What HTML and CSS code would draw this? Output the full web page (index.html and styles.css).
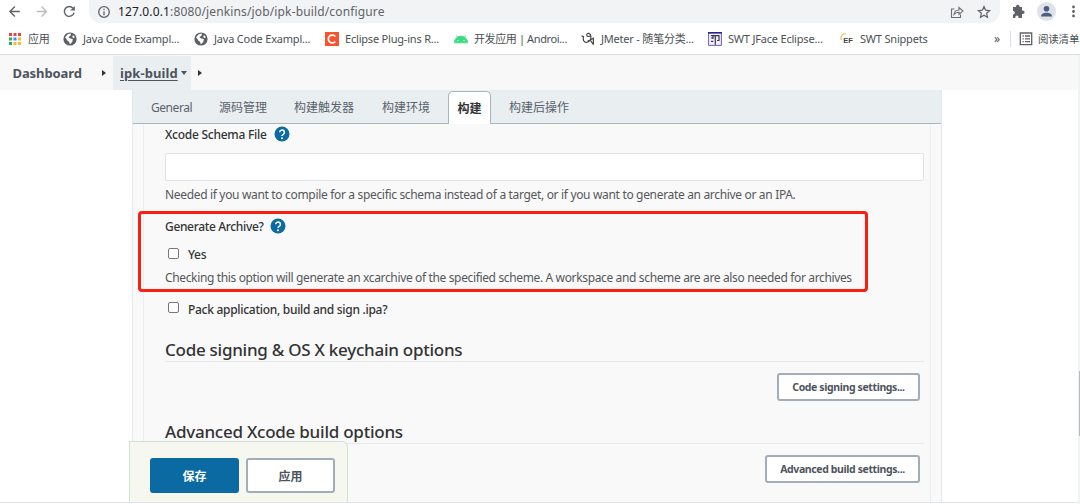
FILE: index.html
```
<!DOCTYPE html>
<html lang="zh-CN">
<head>
<meta charset="utf-8">
<title>ipk-build Config [Jenkins]</title>
<link rel="stylesheet" href="styles.css">
</head>
<body>
<svg class="defs" width="0" height="0">
  <symbol id="globe" viewBox="0 0 14 14"><circle cx="7" cy="7" r="6.6" fill="#5c6064"/><path d="M2 5.2 5 2l3-.4-.4 2L5.400 5.200l1.800 1.400 2.600.5-.5 2.800-2.500 2.400-.8-2.500-1.800-1.200-.7-1.700zM10 3l1.800 2-1 1.200-1.600-1.200z" fill="#fff"/></symbol>
  <symbol id="help" viewBox="0 0 16 16"><circle cx="8" cy="8" r="7.500" fill="#0b6aa2"/><path d="M5.700 6.300a2.350 2.350 0 1 1 3.600 2Q8 9 8 10" fill="none" stroke="#fff" stroke-width="1.500"/><circle cx="8" cy="12.200" r="1" fill="#fff"/></symbol>
</svg>

<header class="toolbar">
  <svg class="nav" viewBox="0 0 90 24" fill="none" stroke="#5f6368" stroke-width="1.400">
    <path d="M20 11.500H10M15 6.500l-5 5 5 5"/>
    <path d="M37 11.500h10M42 6.500l5 5-5 5" stroke="#b9bcc0"/>
    <path d="M74 8.300a5 5 0 1 0 .9 4.500"/><path d="M75.700 6v4.600H71z" fill="#5f6368" stroke="none"/>
  </svg>
  <div class="omnibox">
    <svg class="info" viewBox="0 0 14 14" fill="none" stroke="#5f6368" stroke-width="1.300"><circle cx="7" cy="7" r="5.300"/><path d="M7 6.300v4M7 3.800v1.300"/></svg>
    <span class="url"><b>127.0.0.1</b>:8080/jenkins/job/ipk-build/configure</span>
    <svg class="share" viewBox="0 0 14 14" fill="none" stroke="#6b6f73" stroke-width="1.100"><path d="M4.500 4H1.500v8.500h9V9.500"/><path d="M4 9.500q.6-4.300 5-4.500V2.500L13 6 9 9.300V7.200Q6 7 4 9.500z"/></svg>
    <svg class="star" viewBox="0 0 14 14" fill="none" stroke="#5f6368" stroke-width="1.200"><path d="m7 1.500 1.600 3.700 4 .4-3 2.700.9 4L7 10.200l-3.500 2.100.9-4-3-2.700 4-.4z"/></svg>
  </div>
  <svg class="tools" viewBox="0 0 80 24">
    <path d="M13 7h3V6.500a1.800 1.800 0 0 1 3.600 0V7H22v3.500h.8a1.800 1.800 0 0 1 0 3.600H22V18h-3.500v-1a1.600 1.600 0 0 0-3.200 0v1H13v-3.500h.6a1.800 1.800 0 0 0 0-3.400H13z" fill="#5f6368"/>
    <circle cx="46.500" cy="11.500" r="9.500" fill="#dfe2e8"/><circle cx="46.500" cy="8.800" r="2.800" fill="#4d5f7d"/><path d="M41 16.500c0-3 3-3.800 5.500-3.800s5.500.8 5.500 3.800z" fill="#4d5f7d"/>
    <g fill="#5f6368"><circle cx="73.500" cy="7" r="1.400"/><circle cx="73.500" cy="11.500" r="1.400"/><circle cx="73.500" cy="16" r="1.400"/></g>
  </svg>
</header>

<nav class="bookmarks">
  <div class="bm apps"><svg viewBox="0 0 14 14"><path d="M1 1h3v3H1zM5.500 1h3v3h-3zM10 1h3v3h-3z" fill="#e8453c"/><path d="M1 5.500h3v3H1z" fill="#34a853"/><path d="M5.500 5.500h3v3h-3z" fill="#4285f4"/><path d="M10 5.500h3v3h-3z" fill="#f9bb2d"/><path d="M1 10h3v3H1z" fill="#34a853"/><path d="M5.500 10h3v3h-3zM10 10h3v3h-3z" fill="#f9bb2d"/></svg><span>应用</span></div>
  <div class="bm java"><svg><use href="#globe"/></svg><span>Java Code Exampl...</span></div>
  <div class="bm java"><svg><use href="#globe"/></svg><span>Java Code Exampl...</span></div>
  <div class="bm eclipse"><svg viewBox="0 0 14 14"><path d="M0 0h14v14H0z" fill="#f9522f"/><path d="M10.300 4.600A3.900 3.900 0 1 0 10.300 9.400" fill="none" stroke="#fff" stroke-width="1.700"/></svg><span>Eclipse Plug-ins R...</span></div>
  <div class="bm android"><svg viewBox="0 0 14 14"><path d="M.3 10.800a6.700 6.700 0 0 1 13.400 0zM2.300 3.300l2 3M11.700 3.300l-2 3" fill="#3ddc84" stroke="#3ddc84" stroke-width=".8"/><circle cx="4" cy="8.500" r=".6" fill="#fff"/><circle cx="10" cy="8.500" r=".6" fill="#fff"/></svg><span>开发应用 | Androi...</span></div>
  <div class="bm jmeter"><svg viewBox="0 0 14 14" fill="none" stroke="#444" stroke-width="1.200"><path d="M.5 3.800l2 .9c-.8 3.200.3 5.600 2.900 5.600 2.800 0 4.700-2.200 4.500-5.800C9.700 1 6.200.4 5.700 2.700c-.3 2 2.600 2.500 4 .6M6.500 9.300l5.900-3.100v6.500M9.300 8.200l3 4.300"/></svg><span>JMeter - 随笔分类...</span></div>
  <div class="bm swt"><svg viewBox="0 0 14 14" fill="none"><path d="M.6.6h12.800v12.800H.6z" fill="#f3f0fc" stroke="#6a5bc8"/><path d="M0 .8h14" stroke="#26258b" stroke-width="1.600"/><path d="M3 3.700h8.500M7.300 3.700v9M3 6h2M3 9.300h2.300M11 4v4.500H9M5 4v3" stroke="#37364c" stroke-width="1.200"/></svg><span>SWT JFace Eclipse...</span></div>
  <div class="bm snippets"><svg viewBox="0 0 14 14"><path d="M1.300 8A4.500 4.500 0 0 1 6 1.800" fill="none" stroke="#f2b45f" stroke-width="1.200"/><text class="ef" x="3.200" y="10.500">EF</text></svg><span>SWT Snippets</span></div>
  <span class="more">»</span>
  <div class="bm reading"><svg viewBox="0 0 14 14" fill="none" stroke="#5f6368" stroke-width="1.300"><path d="M1.300 1h11.400v11.600H1.300z"/><path d="M3.500 4h1.300M6 4h5M3.500 6.800h1.300M6 6.800h5M3.500 9.600h1.300M6 9.600h5"/></svg><span>阅读清单</span></div>
</nav>

<nav class="crumbs">
  <span class="dash">Dashboard</span>
  <i class="tri"></i>
  <span class="current"><u>ipk-build</u><i class="caret"></i></span>
  <i class="tri"></i>
</nav>

<main class="page">
  <section class="panel">
    <div class="tabs">
      <span class="tab t1">General</span><span class="tab t2">源码管理</span><span class="tab t3">构建触发器</span><span class="tab t4">构建环境</span><span class="tab active">构建</span><span class="tab t6">构建后操作</span>
    </div>
    <div class="form">
      <div class="label first"><span class="l1">Xcode Schema File</span><svg class="q"><use href="#help"/></svg></div>
      <input class="field" type="text" aria-label="Xcode Schema File">
      <p class="desc d1">Needed if you want to compile for a specific schema instead of a target, or if you want to generate an archive or an IPA.</p>
      <div class="marked">
        <div class="label"><span class="l2">Generate Archive?</span><svg class="q"><use href="#help"/></svg></div>
        <label class="check yes"><i class="box"></i><span>Yes</span></label>
        <p class="desc d2">Checking this option will generate an xcarchive of the specified scheme. A workspace and scheme are are also needed for archives</p>
      </div>
      <label class="check pack"><i class="box"></i><span>Pack application, build and sign .ipa?</span></label>
      <h2 class="h1st">Code signing &amp; OS X keychain options</h2>
      <div class="actions"><button class="btn b1"><span>Code signing settings...</span></button></div>
      <h2 class="h2nd">Advanced Xcode build options</h2>
      <div class="actions"><button class="btn b2"><span>Advanced build settings...</span></button></div>
    </div>
  </section>
  <div class="savebar"><button class="save">保存</button><button class="apply">应用</button></div>
</main>
<div class="scrollbar"><i></i></div>
</body>
</html>
```
FILE: styles.css
```
* { box-sizing: border-box; }
body { margin: 0; width: 1080px; height: 504px; overflow: hidden; position: relative; background: #fff; color: #333; font-family: "Noto Sans", "Noto Sans CJK SC", sans-serif; font-size: 12px; }
.defs { position: absolute; }
svg { display: block; flex: none; }
span { white-space: nowrap; }

.toolbar { height: 24px; display: flex; }
.nav { width: 89px; height: 24px; }
.omnibox { width: 911px; height: 23px; display: flex; align-items: center; background: #f1f3f4; border-radius: 0 0 12px 12px; padding-left: 8px; }
.info { width: 14px; height: 14px; }
.url { margin-left: 7px; width: 832px; font-size: 12px; line-height: 20px; color: #5f6368; letter-spacing: .14px; }
.url b { font-weight: 400; color: #202124; }
.share { width: 14px; height: 14px; }
.star { width: 14px; height: 14px; margin-left: 13px; }
.tools { width: 80px; height: 24px; }

.bookmarks { height: 31px; display: flex; align-items: center; padding-left: 8px; border-bottom: 1px solid #dcdddf; color: #4b4f53; }
.bm { display: flex; flex: none; align-items: center; gap: 6px; font-size: 11px; line-height: 16px; }
.bm span { letter-spacing: -.2px; }
.bm svg { width: 14px; height: 14px; }
.apps { width: 55px; }
.java { width: 131px; }
.eclipse { width: 129px; }
.android, .jmeter { width: 127px; }
.android span { letter-spacing: -.38px; }
.swt { width: 132px; }
.snippets { width: 154px; }
.ef { font: bold 7.500px "Liberation Sans", sans-serif; fill: #444; }
.more { flex: none; width: 16px; font-size: 12px; line-height: 16px; }
.reading { border-left: 1px solid #dcdddf; padding-left: 8px; gap: 5px; font-size: 10.500px; }

.crumbs { height: 35px; padding-top: 1px; background: #f8f8f8; display: flex; align-items: center; font-size: 13px; font-weight: 700; color: #4d545d; }
.dash { margin-left: 12.500px; width: 89.500px; letter-spacing: -.1px; }
.tri { border-left: 4px solid #333; border-top: 3.500px solid transparent; border-bottom: 3.500px solid transparent; }
.current { margin: 0 7px; width: 78px; height: 34px; background: #e9eef1; display: flex; align-items: center; padding-left: 7px; }
.current u { text-underline-offset: 2px; width: 61px; letter-spacing: .08px; }
.caret { border-top: 4px solid #4d545d; border-left: 3.500px solid transparent; border-right: 3.500px solid transparent; }

.page { height: 413px; position: relative; border-bottom: 1px solid #e2e4e5; }
.panel { margin-left: 132px; width: 810px; height: 412px; background: #f9f9f9; border: solid #e6e9eb; border-width: 0 1px; overflow: hidden; }
.tabs { height: 34px; background: #e9eef1; border-bottom: 1px solid #a9b5bf; display: flex; color: #5a636c; font-size: 12px; line-height: 36px; padding-left: 18px; }
.tab { height: 33px; }
.t1 { width: 68px; letter-spacing: -.45px; }
.t2 { width: 75px; }
.t3 { width: 88px; }
.t4 { width: 66px; }
.t6 { margin-left: 18px; }
.active { width: 43px; height: 33px; margin-top: 1px; line-height: 33px; text-align: center; background: #fff; border: 1px solid #a9b5bf; border-bottom: 0; border-radius: 5px 5px 0 0; font-weight: 700; color: #333; }
.form { margin: 0 10px; height: 378px; padding: 0 6px 0 21px; border: solid #ebeeef; border-width: 0 1px; }
.label { display: flex; align-items: center; font-weight: 500; height: 20px; letter-spacing: -.26px; }
.q { width: 16px; height: 16px; margin-left: 7px; }
.marked .q { margin-bottom: 1px; }
.l2 { letter-spacing: -.34px; }
.field { display: block; width: 759px; height: 28px; margin: 9px 0 0; border: 1px solid #dfe3e5; border-radius: 2px; background: #fff; }
.desc { margin: 0; line-height: 18px; height: 18px; white-space: nowrap; color: #55585b; }
.d1 { margin-top: 5px; letter-spacing: -.328px; }
.d2 { letter-spacing: -.357px; }
.marked { width: 730px; height: 81px; margin: 7px 0 0 -27px; padding: 2px 0 0 24px; border: 3px solid #fb1f12; border-radius: 4px; }
.check { display: flex; align-items: center; font-weight: 500; height: 18px; padding-left: 3px; }
.check span { margin-left: 9px; letter-spacing: -.29px; }
.box { width: 11px; height: 11px; border: 1px solid #777; border-radius: 2px; background: #fff; }
.check .box { margin-bottom: 1px; }
.yes { margin-top: 9px; }
.marked .desc { margin-top: 6px; }
.pack { margin-top: 8px; }
.pack .box { margin-bottom: 3px; }
h2 { width: 759px; height: 28px; margin: 0; padding-top: 4px; font-size: 17px; line-height: 24px; font-weight: 500; letter-spacing: -.26px; border-bottom: 1px solid #e6e8e9; white-space: nowrap; color: #333; }
.h1st { margin-top: 16px; }
.h2nd { letter-spacing: -.24px; }
.actions { display: flex; justify-content: flex-end; height: 54px; padding: 11px 4px 0 0; width: 759px; }
.btn, .save, .apply { font-family: inherit; padding: 0; border-radius: 3px; font-weight: 700; background: #fff; color: #4d545d; border: 2px solid #a2adb7; }
.btn { height: 28px; font-size: 10.500px; letter-spacing: -.38px; }
.b1 { width: 143px; }
.b2 { width: 155px; }
.savebar { position: absolute; left: 129px; top: 351px; width: 219px; height: 61px; display: flex; gap: 7px; padding: 16px 0 0 20px; background: #f6f8f0; border: 1px solid #cfe3d7; border-bottom: 0; border-radius: 0 6px 0 0; }
.save, .apply { width: 89px; height: 35px; font-size: 12px; padding-top: 1px; }
.save { background: #0b6aa2; border-color: #0b6aa2; color: #fff; }
.scrollbar { position: absolute; right: 0; top: 55px; width: 2px; height: 449px; background: #f1f2f2; }
.scrollbar i { position: absolute; left: 1px; top: 316px; width: 1px; height: 65px; background: #b8babb; }
```
